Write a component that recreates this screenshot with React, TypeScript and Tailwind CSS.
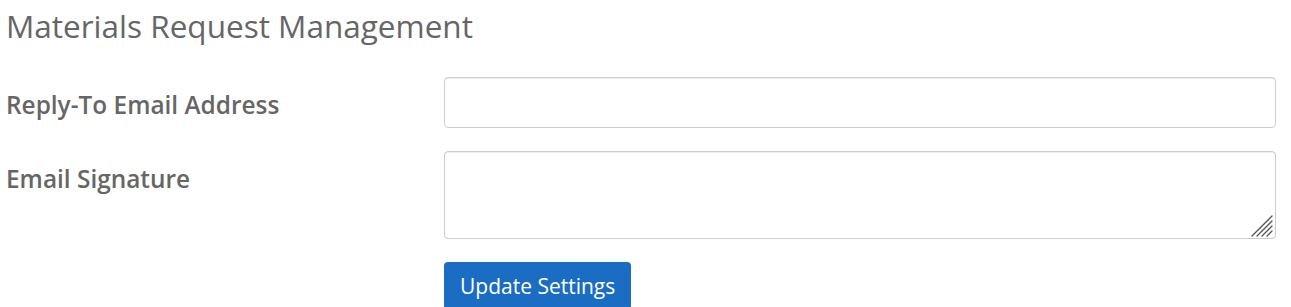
export default function App() {
  return (
    <div className="min-h-screen bg-white pl-[6px] pr-[15px] font-['Open_Sans',sans-serif] text-[#666]">
      <h1 className="pt-[6px] text-[31.5px] font-normal leading-[40px] text-[#666]">
        Materials Request Management
      </h1>

      <form className="mt-[31px] flex flex-col gap-[23px]">
        <div className="grid grid-cols-[438px_1fr] items-start">
          <label className="pt-[13px] text-[24.4px] font-semibold leading-[30px] text-[#666]">
            Reply-To Email Address
          </label>
          <input
            type="text"
            className="h-[51px] w-full rounded-[4px] border border-[#ccc] bg-white px-3 text-[18px] shadow-[inset_0_1px_1px_rgba(0,0,0,0.075)] outline-none"
          />
        </div>

        <div className="grid grid-cols-[438px_1fr] items-start">
          <label className="pt-[13px] text-[24.4px] font-semibold leading-[30px] text-[#666]">
            Email Signature
          </label>
          <div className="relative">
            <textarea className="block h-[88px] w-full resize-none rounded-[4px] border border-[#ccc] bg-white px-3 py-2 text-[18px] shadow-[inset_0_1px_1px_rgba(0,0,0,0.075)] outline-none" />
            <svg
              className="pointer-events-none absolute bottom-[2px] right-[3px]"
              width="22"
              height="22"
              viewBox="0 0 22 22"
            >
              <g stroke="#555" strokeWidth="1.3" strokeLinecap="round">
                <line x1="1" y1="21" x2="21" y2="1" />
                <line x1="6" y1="21" x2="21" y2="6" />
                <line x1="11" y1="21" x2="21" y2="11" />
                <line x1="16" y1="21" x2="21" y2="16" />
              </g>
            </svg>
          </div>
        </div>

        <div className="grid grid-cols-[438px_1fr]">
          <div />
          <div>
            <button
              type="button"
              className="h-[48px] rounded-[4px] bg-[#1a6dc3] px-[16px] text-[21px] leading-[28px] text-white"
            >
              Update Settings
            </button>
          </div>
        </div>
      </form>
    </div>
  );
}
